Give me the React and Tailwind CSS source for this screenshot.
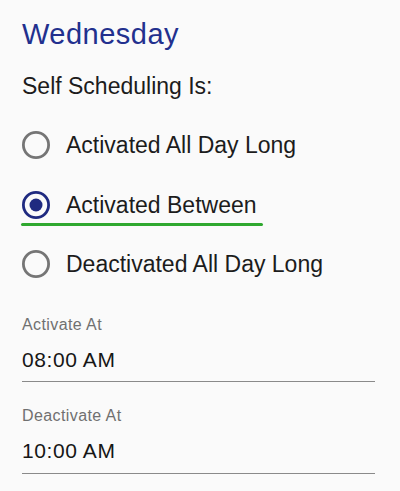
import React from "react";

function Radio({ checked }) {
  return (
    <svg width="28" height="28" viewBox="0 0 28 28" className="shrink-0">
      <circle
        cx="14"
        cy="14"
        r="12.6"
        fill="none"
        stroke={checked ? "#1f2a80" : "#757575"}
        strokeWidth="2.8"
      />
      {checked && <circle cx="14" cy="14" r="6.5" fill="#1f2a80" />}
    </svg>
  );
}

function Option({ label, checked, highlight }) {
  return (
    <div className="relative flex h-[59.5px] items-center gap-4">
      <Radio checked={checked} />
      <span className="text-[23px] leading-[30px] text-[#1c1c1c]">{label}</span>
      {highlight && (
        <div className="absolute left-[-1px] top-[48.25px] h-[2.5px] w-[242px] rounded-full bg-[#2fa82f]" />
      )}
    </div>
  );
}

function TimeField({ label, value, className }) {
  return (
    <div className={className}>
      <div className="text-[16px] leading-[20px] tracking-[0.4px] text-[#707070]">{label}</div>
      <div className="mt-[10.8px] border-b-[1.5px] border-[#8a8a8a] pb-[7.5px] text-[21px] leading-[28px] tracking-[0.6px] text-[#161616]">
        {value}
      </div>
    </div>
  );
}

export default function App() {
  return (
    <div
      className="h-[491px] w-[400px] overflow-hidden bg-[#fafafa] pl-[22px] pr-[25px] pt-[16px]"
      style={{ fontFamily: '"Liberation Sans", Arial, sans-serif' }}
    >
      <div className="text-[29px] leading-[36px] tracking-[0.5px] text-[#22308e]">Wednesday</div>
      <div className="mt-[19px] text-[23px] leading-[30px] text-[#1c1c1c]">Self Scheduling Is:</div>
      <div className="mt-[14.25px] flex flex-col">
        <Option label="Activated All Day Long" />
        <Option label="Activated Between" checked highlight />
        <Option label="Deactivated All Day Long" />
      </div>
      <TimeField className="mt-[21.4px]" label="Activate At" value="08:00 AM" />
      <TimeField className="mt-[24px]" label="Deactivate At" value="10:00 AM" />
    </div>
  );
}
